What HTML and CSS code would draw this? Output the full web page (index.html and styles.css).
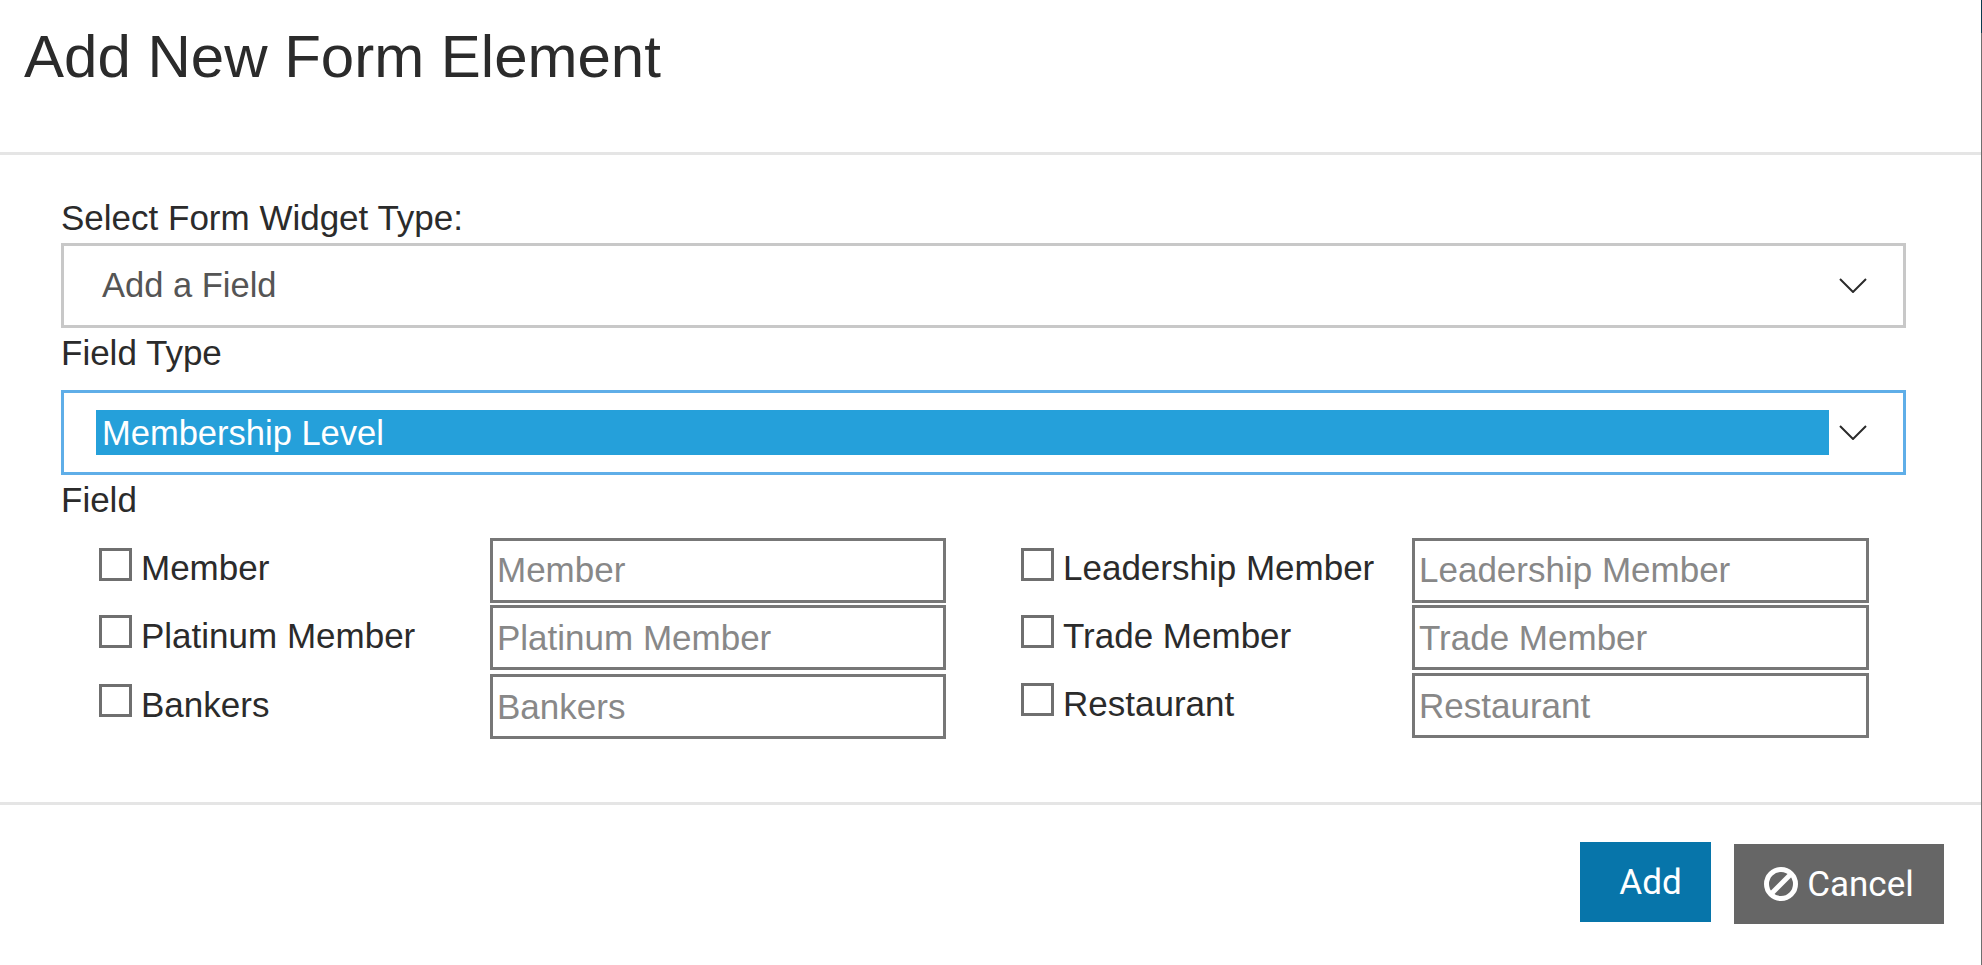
FILE: index.html
```html
<!DOCTYPE html>
<html lang="en">
<head>
<meta charset="utf-8">
<title>Add New Form Element</title>
<link rel="stylesheet" href="styles.css">
</head>
<body>
<div class="dialog">
  <header class="head"><h1 class="title">Add New Form Element</h1></header>
  <main class="body">
    <label class="label label-first">Select Form Widget Type:</label>
    <div class="select">
      <span class="select-text">Add a Field</span>
      <svg class="chevron" viewBox="0 0 28 15" aria-hidden="true"><path d="M1 1 L14 14 L27 1" fill="none" stroke="#2b2b2b" stroke-width="2"/></svg>
    </div>
    <label class="label label-second">Field Type</label>
    <div class="select select-focus">
      <span class="select-text select-hl">Membership Level</span>
      <svg class="chevron" viewBox="0 0 28 15" aria-hidden="true"><path d="M1 1 L14 14 L27 1" fill="none" stroke="#2b2b2b" stroke-width="2"/></svg>
    </div>
    <label class="label label-third">Field</label>
    <div class="fields">
      <div class="col col-a">
        <div class="row"><input class="check" type="checkbox" aria-label="Member"><span class="name">Member</span><input class="text" type="text" placeholder="Member"></div>
        <div class="row"><input class="check" type="checkbox" aria-label="Platinum Member"><span class="name">Platinum Member</span><input class="text" type="text" placeholder="Platinum Member"></div>
        <div class="row"><input class="check" type="checkbox" aria-label="Bankers"><span class="name">Bankers</span><input class="text" type="text" placeholder="Bankers"></div>
      </div>
      <div class="col col-b">
        <div class="row"><input class="check" type="checkbox" aria-label="Leadership Member"><span class="name">Leadership Member</span><input class="text" type="text" placeholder="Leadership Member"></div>
        <div class="row"><input class="check" type="checkbox" aria-label="Trade Member"><span class="name">Trade Member</span><input class="text" type="text" placeholder="Trade Member"></div>
        <div class="row"><input class="check" type="checkbox" aria-label="Restaurant"><span class="name">Restaurant</span><input class="text" type="text" placeholder="Restaurant"></div>
      </div>
    </div>
  </main>
  <footer class="foot">
    <button class="btn btn-add" type="button">Add</button>
    <button class="btn btn-cancel" type="button">
      <svg class="ban" viewBox="0 0 34 34" aria-hidden="true"><circle cx="17" cy="17" r="14.5" fill="none" stroke="#fff" stroke-width="5"/><path d="M8 26 L26 8" stroke="#fff" stroke-width="5"/></svg>
      <span>Cancel</span>
    </button>
  </footer>
</div>
</body>
</html>
```
FILE: styles.css
```css
* { box-sizing: border-box; }
html, body { margin: 0; padding: 0; height: 100%; }
body { background: #fff; font-family: "Liberation Sans", Arial, sans-serif; color: #2b2b2b; overflow: hidden; }
.dialog { position: relative; height: 965px; border-right: 1px solid #6e6e6e; }
.dialog::after { content: ""; position: absolute; top: 0; right: -1px; width: 1px; height: 33px; background: #0b3a4d; }
.head { height: 155px; border-bottom: 3px solid #e5e5e5; padding: 24px 0 0 24px; }
.title { margin: 0; font-size: 60px; font-weight: 400; line-height: 66px; }
.body { height: 650px; padding: 0 75px 0 61px; border-bottom: 3px solid #e5e5e5; }
.label { display: block; font-size: 35px; line-height: 38px; }
.label-first { padding-top: 44px; height: 88px; }
.label-second { height: 62px; padding-top: 6px; }
.label-third { height: 63px; padding-top: 6px; }
.select { height: 85px; border: 3px solid #c8c8c8; display: flex; align-items: center; padding: 0 30px 0 32px; }
.select-focus { border-color: #5faee8; }
.select-text { flex: 1; font-size: 34.5px; line-height: 45px; color: #555; padding-left: 6px; }
.select-hl { background: #25a0da; color: #fff; margin-right: 7px; padding-top: 2px; line-height: 43px; }
.chevron { width: 28px; height: 15px; margin-left: 3px; margin-right: 6px; }
.fields { display: flex; }
.col { flex: 0 0 922px; padding-left: 38px; }
.row { display: flex; align-items: flex-start; height: 67px; }
.row + .row + .row { margin-top: 1px; }
.col-a .row + .row + .row { margin-top: 2px; }
.check { appearance: none; width: 33px; height: 33px; margin: 10px 0 0 0; border: 3px solid #6f6f6f; background: #fff; flex: none; }
.name { width: 358px; flex: none; font-size: 35px; line-height: 38px; padding: 12px 0 0 9px; }
.row:first-child .name { padding-top: 11px; }
.text { width: 456px; height: 65px; flex: none; border: 3px solid #777; padding: 0 4px; font: 35px "Liberation Sans", Arial, sans-serif; color: #888; background: #fff; }
.row:first-child .text { padding-bottom: 2px; }
.col-b .text { width: 457px; }
.text::placeholder { color: #888; opacity: 1; }
.foot { display: flex; justify-content: flex-end; align-items: flex-start; gap: 23px; padding: 37px 37px 0 0; }
.btn { border: 0; color: #fff; font: 35px Roboto, sans-serif; display: flex; align-items: center; justify-content: center; }
.btn-add { width: 131px; height: 80px; background: #0775aa; padding: 0 0 0 10px; }
.btn-cancel { width: 210px; height: 80px; background: #666; margin-top: 2px; gap: 9px; padding: 0; }
.ban { width: 34px; height: 34px; }
```
